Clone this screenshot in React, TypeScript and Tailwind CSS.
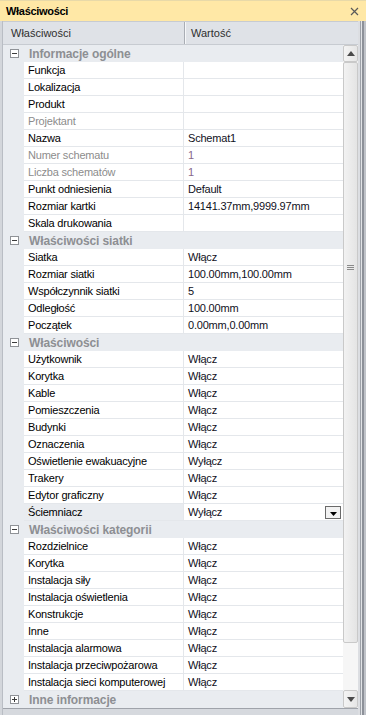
import React from "react";

type Row =
  | { kind: "group"; label: string; open: boolean }
  | { kind: "item"; name: string; value?: string; disabled?: boolean; selected?: boolean; dropdown?: boolean };

const rows: Row[] = [
  { kind: "group", label: "Informacje ogólne", open: true },
  { kind: "item", name: "Funkcja" },
  { kind: "item", name: "Lokalizacja" },
  { kind: "item", name: "Produkt" },
  { kind: "item", name: "Projektant", disabled: true },
  { kind: "item", name: "Nazwa", value: "Schemat1" },
  { kind: "item", name: "Numer schematu", value: "1", disabled: true },
  { kind: "item", name: "Liczba schematów", value: "1", disabled: true },
  { kind: "item", name: "Punkt odniesienia", value: "Default" },
  { kind: "item", name: "Rozmiar kartki", value: "14141.37mm,9999.97mm" },
  { kind: "item", name: "Skala drukowania" },
  { kind: "group", label: "Właściwości siatki", open: true },
  { kind: "item", name: "Siatka", value: "Włącz" },
  { kind: "item", name: "Rozmiar siatki", value: "100.00mm,100.00mm" },
  { kind: "item", name: "Współczynnik siatki", value: "5" },
  { kind: "item", name: "Odległość", value: "100.00mm" },
  { kind: "item", name: "Początek", value: "0.00mm,0.00mm" },
  { kind: "group", label: "Właściwości", open: true },
  { kind: "item", name: "Użytkownik", value: "Włącz" },
  { kind: "item", name: "Korytka", value: "Włącz" },
  { kind: "item", name: "Kable", value: "Włącz" },
  { kind: "item", name: "Pomieszczenia", value: "Włącz" },
  { kind: "item", name: "Budynki", value: "Włącz" },
  { kind: "item", name: "Oznaczenia", value: "Włącz" },
  { kind: "item", name: "Oświetlenie ewakuacyjne", value: "Wyłącz" },
  { kind: "item", name: "Trakery", value: "Włącz" },
  { kind: "item", name: "Edytor graficzny", value: "Włącz" },
  { kind: "item", name: "Ściemniacz", value: "Wyłącz", selected: true, dropdown: true },
  { kind: "group", label: "Właściwości kategorii", open: true },
  { kind: "item", name: "Rozdzielnice", value: "Włącz" },
  { kind: "item", name: "Korytka", value: "Włącz" },
  { kind: "item", name: "Instalacja siły", value: "Włącz" },
  { kind: "item", name: "Instalacja oświetlenia", value: "Włącz" },
  { kind: "item", name: "Konstrukcje", value: "Włącz" },
  { kind: "item", name: "Inne", value: "Włącz" },
  { kind: "item", name: "Instalacja alarmowa", value: "Włącz" },
  { kind: "item", name: "Instalacja przeciwpożarowa", value: "Włącz" },
  { kind: "item", name: "Instalacja sieci komputerowej", value: "Włącz" },
  { kind: "group", label: "Inne informacje", open: false },
];

function Expander({ open }: { open: boolean }) {
  return (
    <svg width="9" height="9" viewBox="0 0 9 9" className="shrink-0">
      <rect x="0.5" y="0.5" width="8" height="8" fill="#ffffff" stroke="#8f9297" />
      <line x1="2" y1="4.5" x2="7" y2="4.5" stroke="#3c3c3c" />
      {!open && <line x1="4.5" y1="2" x2="4.5" y2="7" stroke="#3c3c3c" />}
    </svg>
  );
}

function GroupRow({ label, open }: { label: string; open: boolean }) {
  return (
    <div className="flex h-[17px] items-center bg-[#e9ecf0]">
      <div className="w-[26px] flex items-center pl-[7px]">
        <Expander open={open} />
      </div>
      <span className="text-[12px] font-bold text-[#8d8f93] tracking-[-0.1px] leading-none">{label}</span>
    </div>
  );
}

function ItemRow({ r }: { r: Extract<Row, { kind: "item" }> }) {
  return (
    <div className="flex h-[17px]">
      <div className="w-[21px] bg-[#e9ecf0]" />
      <div
        className={
          "w-[159px] border-b border-[#e4e7eb] pl-[4px] flex items-center text-[11px] tracking-[-0.2px] leading-none " +
          (r.selected ? "bg-[#e9ecf0] " : "bg-white ") +
          (r.disabled ? "text-[#8c8c8c]" : "text-black")
        }
      >
        {r.name}
      </div>
      <div className="w-px bg-[#e4e7eb]" />
      <div
        className={
          "flex-1 bg-white border-b border-[#e4e7eb] pl-[4px] pr-[2px] flex items-center justify-between text-[11px] tracking-[-0.2px] leading-none " +
          (r.disabled ? "text-[#86688a]" : "text-[#10101c]")
        }
      >
        <span>{r.value ?? ""}</span>
        {r.dropdown && (
          <div className="w-[16px] h-[13px] border border-[#6a6a6a] bg-[#f2f2f2] flex items-end justify-center pb-[2px]">
            <svg width="7" height="4" viewBox="0 0 7 4">
              <polygon points="0,0 7,0 3.5,4" fill="#000" />
            </svg>
          </div>
        )}
      </div>
    </div>
  );
}

function Scrollbar() {
  return (
    <div className="w-[15px] flex flex-col bg-[#f6f6f6]">
      <div className="h-[17px] border border-[#c9c9c9] rounded-[2px] bg-gradient-to-r from-[#f4f4f4] to-[#e6e6e6] flex items-center justify-center">
        <svg width="8" height="5" viewBox="0 0 8 5">
          <polygon points="0,5 8,5 4,0" fill="#4a4a4a" />
        </svg>
      </div>
      <div className="h-[581px] relative border border-[#c9c9c9] rounded-[2px] bg-gradient-to-r from-[#f2f2f2] to-[#e4e4e4]">
        <div className="absolute left-[3px] top-[202px] w-[7px] flex flex-col gap-[1px]">
          <div className="h-px bg-[#8a8a8a]" />
          <div className="h-px bg-[#8a8a8a]" />
          <div className="h-px bg-[#8a8a8a]" />
        </div>
      </div>
      <div className="flex-1" />
      <div className="h-[18px] border border-[#c9c9c9] rounded-[2px] bg-gradient-to-r from-[#f4f4f4] to-[#e6e6e6] flex items-center justify-center">
        <svg width="8" height="5" viewBox="0 0 8 5">
          <polygon points="0,0 8,0 4,5" fill="#4a4a4a" />
        </svg>
      </div>
    </div>
  );
}

export default function App() {
  return (
    <div className="w-[366px] h-[715px] overflow-hidden flex flex-col bg-[#d9dce1] font-['Liberation_Sans',Arial,sans-serif]">
      {/* title bar */}
      <div className="h-[21px] shrink-0 bg-[#ffe8a6] border-t border-[#e8d9a8] flex items-center justify-between pl-[6px] pr-[6px]">
        <span className="text-[11px] font-bold text-black tracking-[-0.3px] leading-none">Właściwości</span>
        <svg width="9" height="9" viewBox="0 0 9 9" className="mr-[1px]">
          <path d="M1 1 L8 8 M8 1 L1 8" stroke="#5a5a5a" strokeWidth="1.2" />
        </svg>
      </div>
      <div className="flex flex-1 min-h-0">
        {/* left frame */}
        <div className="w-[3px] bg-[#d3d6db] border-r border-[#b9bdc4]" />
        <div className="w-[355px] flex flex-col">
          {/* column header */}
          <div className="h-[24px] shrink-0 flex bg-[#dfe2e7] border-t border-[#c7cbd1] border-b border-[#b5b9c0] text-[11px] text-[#2e2e2e] leading-none">
            <div className="w-[182px] pl-[8px] flex items-center border-r border-[#a9adb4]">Właściwości</div>
            <div className="flex-1 pl-[5px] flex items-center border-l border-[#f6f7f9]">Wartość</div>
          </div>
          <div className="flex flex-1 min-h-0">
            <div className="w-[340px] flex flex-col bg-[#e9ecf0]">
              {rows.map((r, i) =>
                r.kind === "group" ? (
                  <GroupRow key={i} label={r.label} open={r.open} />
                ) : (
                  <ItemRow key={i} r={r} />
                )
              )}
            </div>
            <Scrollbar />
          </div>
          {/* bottom frame */}
          <div className="h-[7px] shrink-0 border-t border-[#9fa3aa] bg-[#d6d9de]" />
        </div>
        {/* right frame */}
        <div className="w-[8px] flex">
          <div className="w-[2px] bg-[#dcdee2]" />
          <div className="w-px bg-[#9ea2a9]" />
          <div className="w-px bg-[#e2e4e7]" />
          <div className="w-[2px] bg-[#8d9199]" />
          <div className="w-[2px] bg-[#c0c3c9]" />
        </div>
      </div>
    </div>
  );
}
